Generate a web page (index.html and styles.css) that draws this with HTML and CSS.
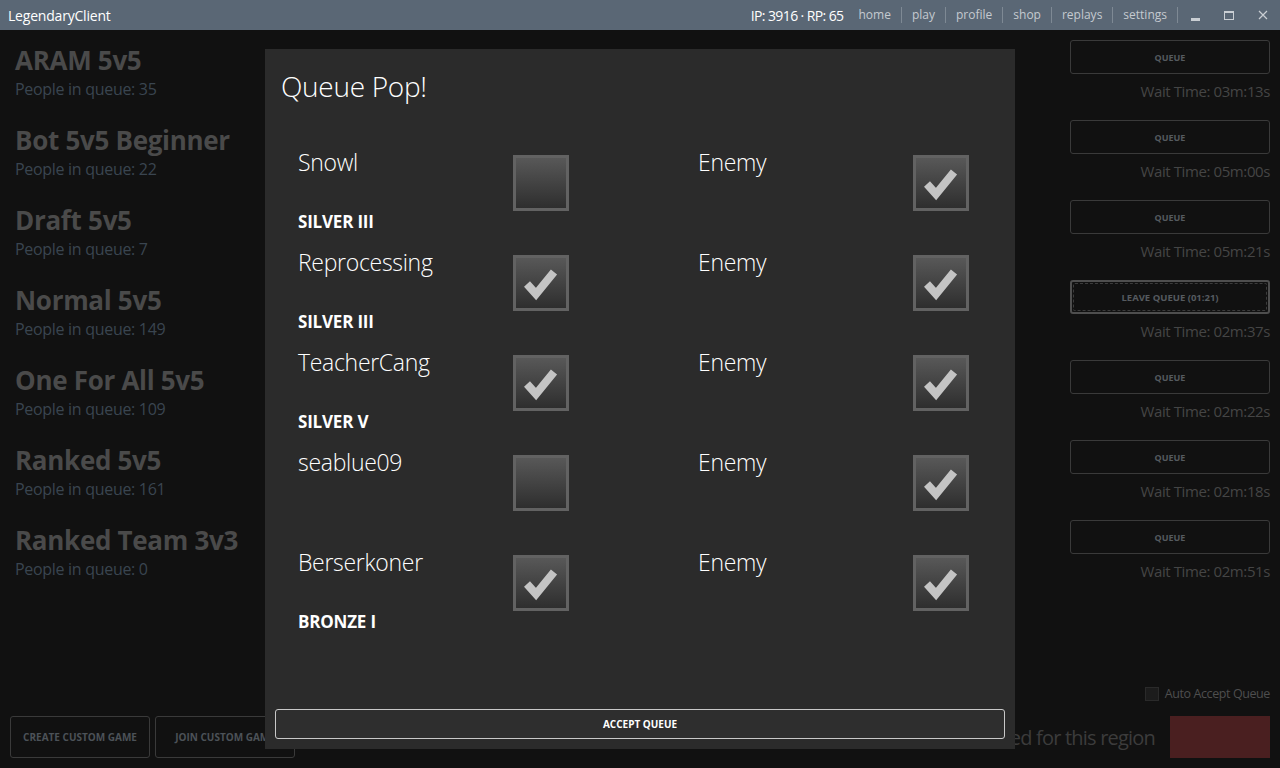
FILE: index.html
```html
<!DOCTYPE html>
<html lang="en">
<head>
    <meta charset="UTF-8">
    <meta name="viewport" content="width=device-width, initial-scale=1.0">
    <title>LegendaryClient</title>
    <link rel="stylesheet" href="styles.css">
</head>
<body>
    <!-- Title Bar -->
    <div class="titlebar">
        <span class="app-name">LegendaryClient</span>
        <div class="titlebar-right">
            <span class="currency">IP: 3916 · RP: 65</span>
            <nav class="nav">
                <a class="nav-link">home</a>
                <a class="nav-link">play</a>
                <a class="nav-link">profile</a>
                <a class="nav-link">shop</a>
                <a class="nav-link">replays</a>
                <a class="nav-link">settings</a>
            </nav>
            <div class="window-controls">
                <span class="win-btn"><span class="win-min"></span></span>
                <span class="win-btn"><span class="win-max"></span></span>
                <span class="win-btn">
                    <svg width="10" height="10" viewBox="0 0 10 10"><path d="M1 1 L9 9 M9 1 L1 9" stroke="#c9ced3" stroke-width="1.2"/></svg>
                </span>
            </div>
        </div>
    </div>

    <!-- Play Page -->
    <div class="main">
        <div class="content">
            <div class="queue-list">
                <div class="queue-item"><div class="queue-name">ARAM 5v5</div><div class="queue-count">People in queue: 35</div></div>
                <div class="queue-item"><div class="queue-name">Bot 5v5 Beginner</div><div class="queue-count">People in queue: 22</div></div>
                <div class="queue-item"><div class="queue-name">Draft 5v5</div><div class="queue-count">People in queue: 7</div></div>
                <div class="queue-item"><div class="queue-name">Normal 5v5</div><div class="queue-count">People in queue: 149</div></div>
                <div class="queue-item"><div class="queue-name">One For All 5v5</div><div class="queue-count">People in queue: 109</div></div>
                <div class="queue-item"><div class="queue-name">Ranked 5v5</div><div class="queue-count">People in queue: 161</div></div>
                <div class="queue-item"><div class="queue-name">Ranked Team 3v3</div><div class="queue-count">People in queue: 0</div></div>
            </div>
            <div class="queue-actions">
                <div class="action-item"><button class="btn">QUEUE</button><div class="wait-time">Wait Time: 03m:13s</div></div>
                <div class="action-item"><button class="btn">QUEUE</button><div class="wait-time">Wait Time: 05m:00s</div></div>
                <div class="action-item"><button class="btn">QUEUE</button><div class="wait-time">Wait Time: 05m:21s</div></div>
                <div class="action-item"><button class="btn btn-focused"><span>LEAVE QUEUE (01:21)</span></button><div class="wait-time">Wait Time: 02m:37s</div></div>
                <div class="action-item"><button class="btn">QUEUE</button><div class="wait-time">Wait Time: 02m:22s</div></div>
                <div class="action-item"><button class="btn">QUEUE</button><div class="wait-time">Wait Time: 02m:18s</div></div>
                <div class="action-item"><button class="btn">QUEUE</button><div class="wait-time">Wait Time: 02m:51s</div></div>
            </div>
        </div>

        <div class="footer">
            <div class="custom-buttons">
                <button class="btn btn-large">CREATE CUSTOM GAME</button>
                <button class="btn btn-large">JOIN CUSTOM GAME</button>
            </div>
            <div class="footer-right">
                <label class="auto-accept"><span class="small-check"></span>Auto Accept Queue</label>
                <div class="region-row">
                    <span class="region-note">Ranked is disabled for this region</span>
                    <div class="region-block"></div>
                </div>
            </div>
        </div>
    </div>

    <!-- Queue Pop Overlay -->
    <div class="modal">
        <h1 class="modal-title">Queue Pop!</h1>
        <div class="players">
            <div class="player-row">
                <div class="player"><div class="player-info"><div class="player-name">Snowl</div><div class="player-rank">SILVER III</div></div><span class="check"></span></div>
                <div class="player"><div class="player-info"><div class="player-name">Enemy</div></div><span class="check checked"><svg viewBox="0 0 50 50"><polyline points="11,26 20,36 38,14"/></svg></span></div>
            </div>
            <div class="player-row">
                <div class="player"><div class="player-info"><div class="player-name">Reprocessing</div><div class="player-rank">SILVER III</div></div><span class="check checked"><svg viewBox="0 0 50 50"><polyline points="11,26 20,36 38,14"/></svg></span></div>
                <div class="player"><div class="player-info"><div class="player-name">Enemy</div></div><span class="check checked"><svg viewBox="0 0 50 50"><polyline points="11,26 20,36 38,14"/></svg></span></div>
            </div>
            <div class="player-row">
                <div class="player"><div class="player-info"><div class="player-name">TeacherCang</div><div class="player-rank">SILVER V</div></div><span class="check checked"><svg viewBox="0 0 50 50"><polyline points="11,26 20,36 38,14"/></svg></span></div>
                <div class="player"><div class="player-info"><div class="player-name">Enemy</div></div><span class="check checked"><svg viewBox="0 0 50 50"><polyline points="11,26 20,36 38,14"/></svg></span></div>
            </div>
            <div class="player-row">
                <div class="player"><div class="player-info"><div class="player-name">seablue09</div></div><span class="check"></span></div>
                <div class="player"><div class="player-info"><div class="player-name">Enemy</div></div><span class="check checked"><svg viewBox="0 0 50 50"><polyline points="11,26 20,36 38,14"/></svg></span></div>
            </div>
            <div class="player-row">
                <div class="player"><div class="player-info"><div class="player-name">Berserkoner</div><div class="player-rank">BRONZE I</div></div><span class="check checked"><svg viewBox="0 0 50 50"><polyline points="11,26 20,36 38,14"/></svg></span></div>
                <div class="player"><div class="player-info"><div class="player-name">Enemy</div></div><span class="check checked"><svg viewBox="0 0 50 50"><polyline points="11,26 20,36 38,14"/></svg></span></div>
            </div>
        </div>
        <button class="accept-btn">ACCEPT QUEUE</button>
    </div>
</body>
</html>
```

FILE: styles.css
```css
* {
    margin: 0;
    padding: 0;
    box-sizing: border-box;
    font-family: 'Open Sans', 'Noto Sans', sans-serif;
}

body {
    background-color: #111111;
    color: #ffffff;
    width: 1280px;
    height: 768px;
    overflow: hidden;
    position: relative;
}

/* Title bar */
.titlebar {
    height: 30px;
    background: #5a6775;
    display: flex;
    align-items: center;
    justify-content: space-between;
    padding-left: 8px;
}

.app-name {
    font-size: 14px;
    color: #ffffff;
    letter-spacing: -0.2px;
}

.titlebar-right {
    display: flex;
    align-items: center;
    height: 100%;
}

.currency {
    font-size: 14px;
    color: #ffffff;
    letter-spacing: -0.6px;
    margin-right: 5px;
}

.nav {
    display: flex;
    align-items: center;
}

.nav-link {
    font-size: 12px;
    color: #c5cad0;
    padding: 0 10px;
    line-height: 16px;
    border-right: 1px solid #7e8994;
}

.window-controls {
    display: flex;
    align-items: center;
    height: 100%;
}

.win-btn {
    width: 34px;
    height: 100%;
    display: flex;
    align-items: center;
    justify-content: center;
}

.win-min {
    width: 9px;
    height: 3px;
    background: #c9ced3;
    margin-top: 8px;
}

.win-max {
    width: 10px;
    height: 9px;
    border: 1px solid #c9ced3;
    border-top-width: 2px;
}

/* Main play page */
.main {
    height: 738px;
    display: flex;
    flex-direction: column;
    justify-content: space-between;
    padding: 10px;
}

.content {
    display: flex;
    justify-content: space-between;
}

.queue-list {
    padding-top: 4px;
    padding-left: 5px;
}

.queue-item {
    height: 80px;
}

.queue-name {
    font-size: 26px;
    font-weight: bold;
    color: #4a4a4a;
    line-height: 32px;
    letter-spacing: -0.3px;
}

.queue-count {
    font-size: 16px;
    color: #3a4550;
    line-height: 22px;
    margin-top: 2px;
    letter-spacing: -0.3px;
}

.queue-actions {
    width: 200px;
}

.action-item {
    height: 80px;
    display: flex;
    flex-direction: column;
    align-items: flex-end;
}

.btn {
    width: 200px;
    height: 34px;
    background: transparent;
    border: 1px solid #3a3a3a;
    border-radius: 3px;
    color: #555a5f;
    font-size: 9px;
    font-weight: bold;
    cursor: pointer;
}

.btn-focused {
    border: 2px solid #4e4e4e;
    padding: 1px;
}

.btn-focused span {
    display: flex;
    align-items: center;
    justify-content: center;
    height: 100%;
    border: 1px dashed #3c3c3c;
    border-radius: 2px;
    font-size: 9.5px;
}

.wait-time {
    margin-top: 6px;
    font-size: 15px;
    line-height: 22px;
    color: #454545;
    letter-spacing: -0.4px;
}

/* Footer */
.footer {
    display: flex;
    justify-content: space-between;
    align-items: flex-end;
}

.custom-buttons {
    display: flex;
    gap: 5px;
}

.btn-large {
    width: 140px;
    height: 42px;
    font-size: 10px;
    color: #4c5258;
}

.footer-right {
    display: flex;
    flex-direction: column;
    align-items: flex-end;
}

.auto-accept {
    display: flex;
    align-items: center;
    font-size: 12.5px;
    color: #4e4e4e;
    letter-spacing: -0.4px;
    margin-bottom: 14px;
}

.small-check {
    width: 14px;
    height: 14px;
    border: 1px solid #2a2a2a;
    background: #1c1c1c;
    margin-right: 6px;
}

.region-row {
    display: flex;
    align-items: center;
    gap: 15px;
}

.region-note {
    font-size: 20px;
    color: #3c3c3c;
    letter-spacing: -0.8px;
}

.region-block {
    width: 100px;
    height: 42px;
    background: #4a1f20;
}

/* Queue pop overlay */
.modal {
    position: absolute;
    left: 265px;
    top: 49px;
    width: 750px;
    height: 700px;
    background: #2b2b2b;
    padding: 17px 10px 10px 10px;
    display: flex;
    flex-direction: column;
}

.modal-title {
    font-size: 28px;
    font-weight: 300;
    line-height: 40px;
    padding-left: 6px;
    letter-spacing: -0.3px;
}

.players {
    flex: 1;
    padding-top: 39px;
    padding-left: 23px;
}

.player-row {
    display: flex;
    height: 100px;
}

.player {
    width: 400px;
    flex-shrink: 0;
    display: flex;
}

.player-info {
    width: 215px;
}

.player-name {
    font-size: 23px;
    font-weight: 300;
    line-height: 34px;
    height: 65px;
    letter-spacing: -0.3px;
}

.player-rank {
    font-size: 17px;
    font-weight: bold;
    line-height: 24px;
    letter-spacing: -0.2px;
}

.check {
    width: 56px;
    height: 56px;
    margin-top: 10px;
    border: 3px solid #626262;
    background: linear-gradient(180deg, #585858 0%, #2e2e2e 100%);
}

.check svg {
    display: block;
    width: 50px;
    height: 50px;
}

.check polyline {
    fill: none;
    stroke: #c4c4c4;
    stroke-width: 8;
}

.accept-btn {
    height: 30px;
    background: #2e2e2e;
    border: 1px solid #c8c8c8;
    border-radius: 3px;
    color: #ffffff;
    font-size: 10px;
    font-weight: bold;
}
```
